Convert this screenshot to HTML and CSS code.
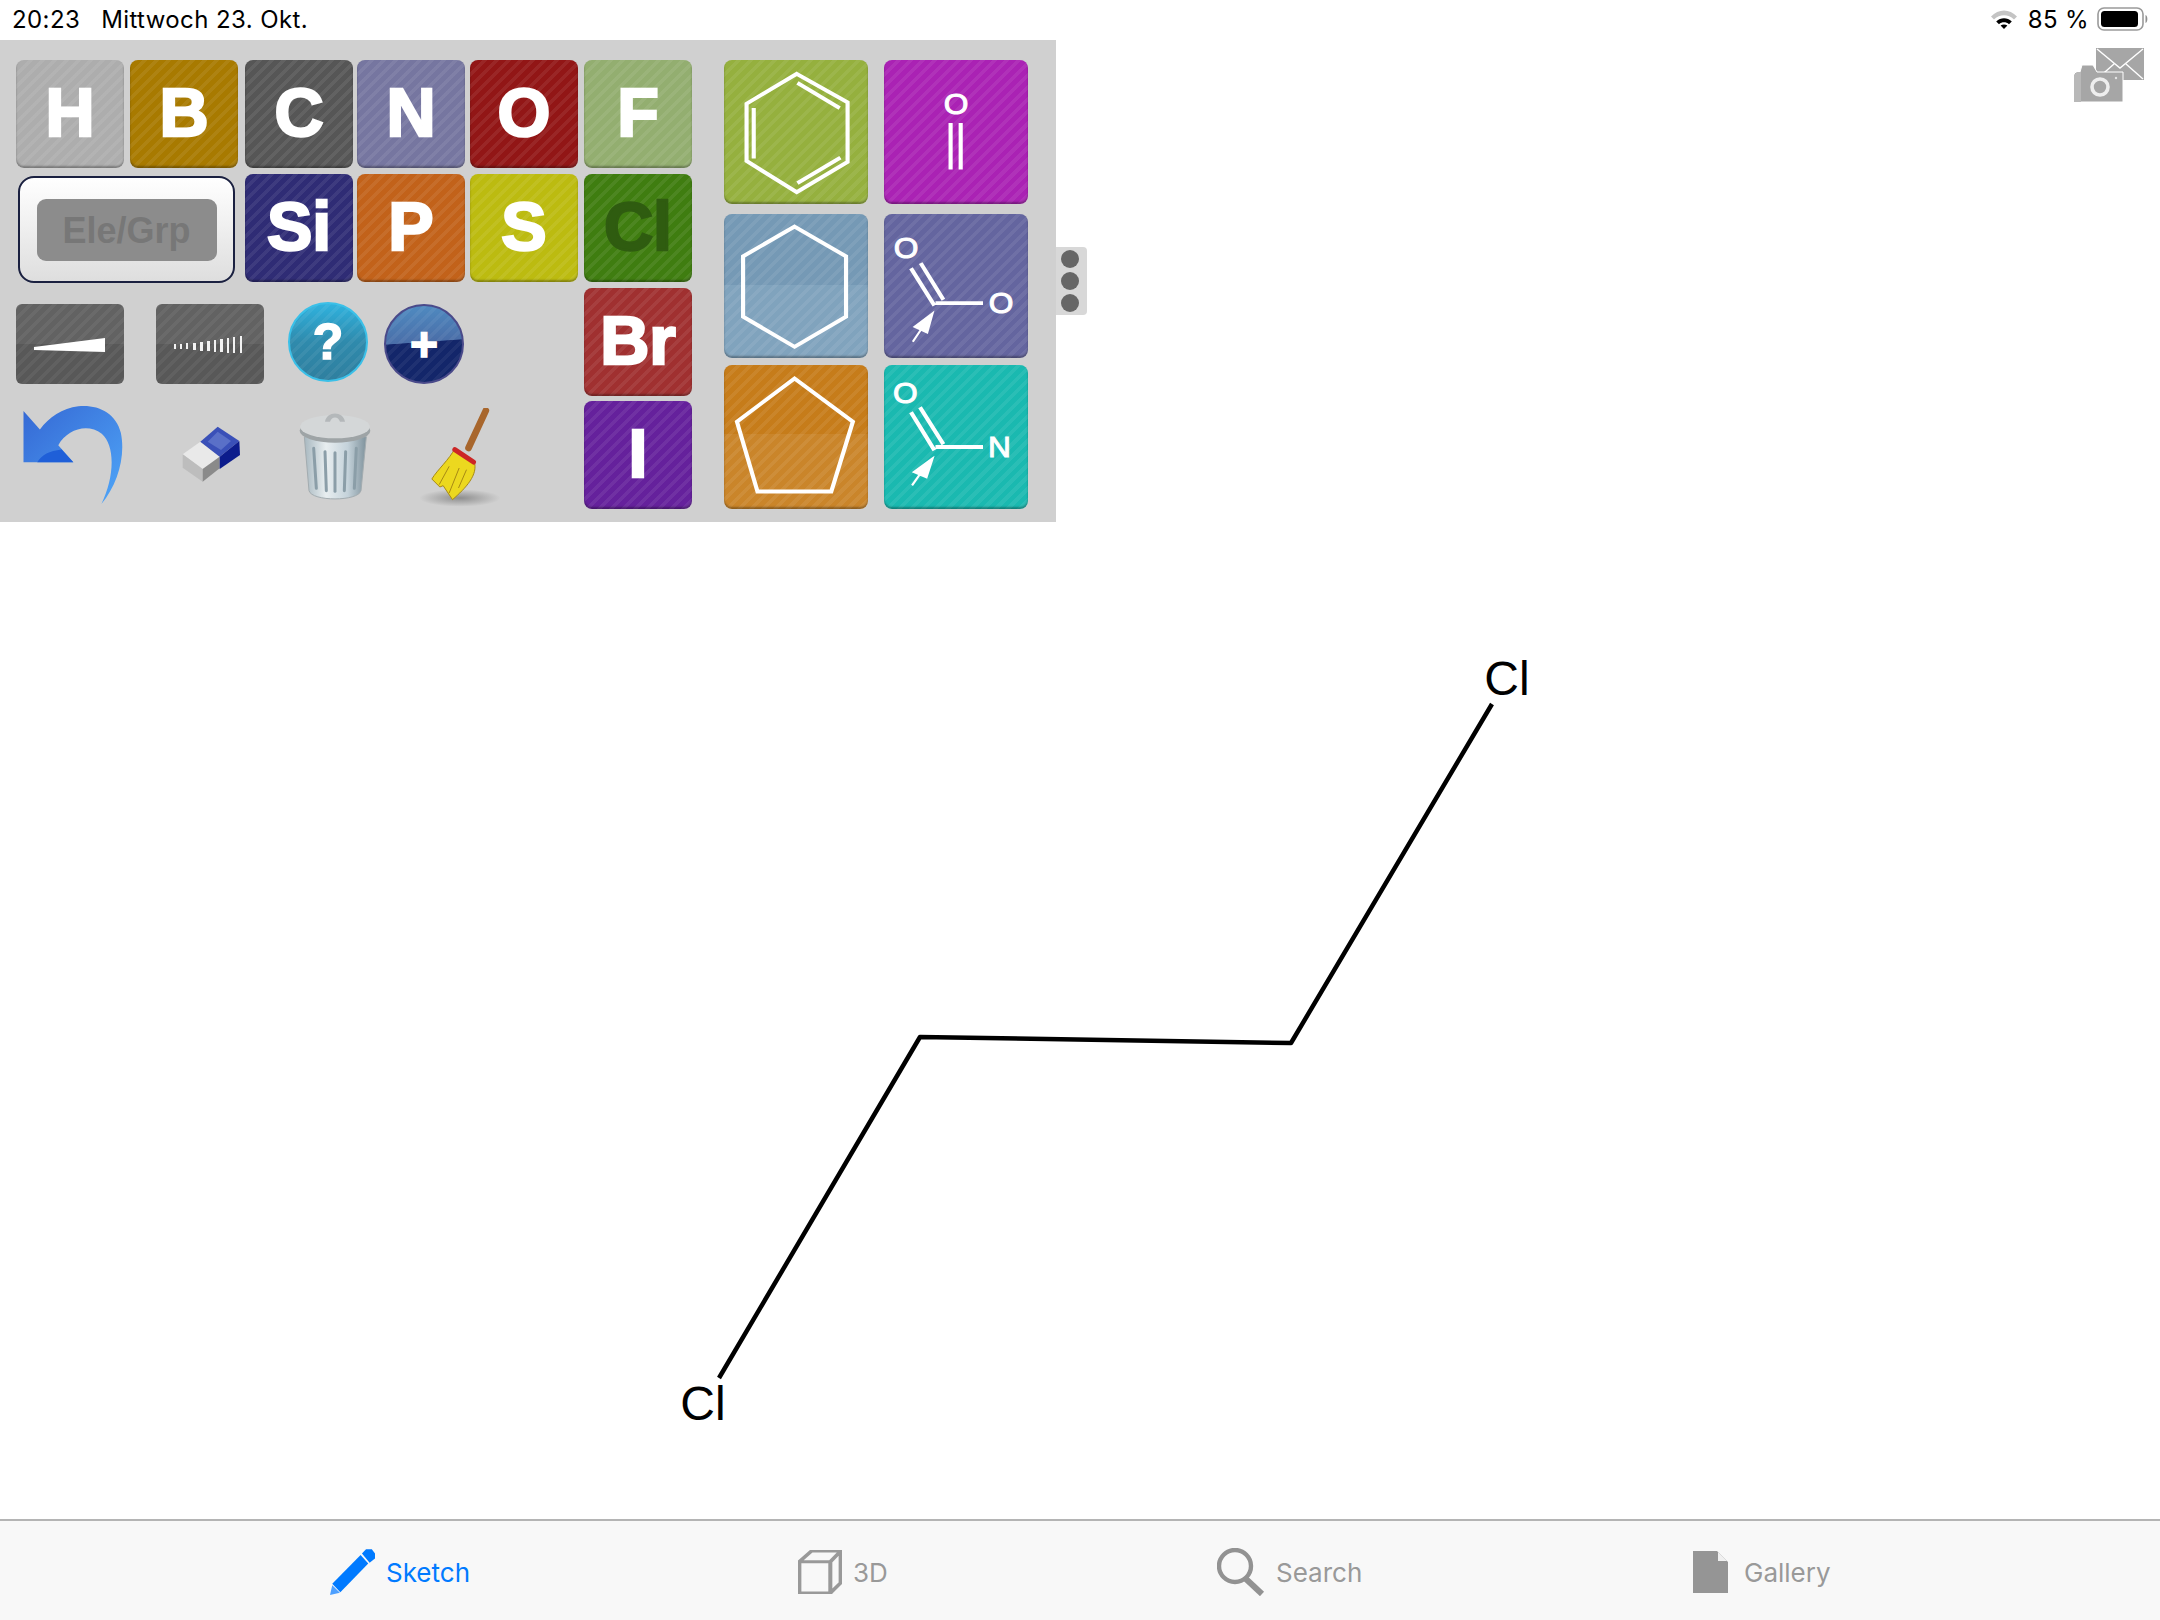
FILE: index.html
```html
<!DOCTYPE html>
<html lang="en">
<head>
  <meta charset="UTF-8">
  <title>Sketch</title>
  <link rel="stylesheet" href="styles.css">
</head>
<body>
  <div class="status">
    <span class="time">20:23</span>
    <span class="date">Mittwoch 23. Okt.</span>
    <svg class="wifi" viewBox="0 0 26 19">
      <path d="M0 6.5 C7.5 -1.5 18.5 -1.5 26 6.5 L23 9.4 C17 4 9 4 3 9.4 Z" fill="#c4c4c4"/>
      <path d="M5.2 11.4 C10 7.2 16 7.2 20.8 11.4 L18 14.2 C15 11.6 11 11.6 8 14.2 Z" fill="#000"/>
      <path d="M9.6 15.6 C11.6 14 14.4 14 16.4 15.6 L13 19 Z" fill="#000"/>
    </svg>
    <span class="pct">85 %</span>
    <svg class="battery" viewBox="0 0 52 24">
      <rect x="1" y="1" width="45" height="22" rx="6" fill="none" stroke="#9a9a9a" stroke-width="1.6"/>
      <rect x="4" y="4" width="37" height="16" rx="3.5" fill="#000"/>
      <path d="M48.5 8 C51 9 51 15 48.5 16 Z" fill="#8f8f8f"/>
    </svg>
  </div>

  <div class="canvas">
    <svg class="molecule" viewBox="0 0 2160 1479">
      <polyline points="1492,664 1291,1003 920,997 719,1338"></polyline>
      <text x="1507" y="655">Cl</text>
      <text x="703" y="1380">Cl</text>
    </svg>

    <svg class="snap" viewBox="0 0 70 54">
      <path d="M22 0 H70 V32 H22 Z" fill="#a6a6a6"/>
      <path d="M23 1 L46 20 L69 1 M23 31 L40 16 M69 31 L52 16" fill="none" stroke="#fff" stroke-width="1.4"/>
      <path d="M3 24 Q0 24 0 27 V54 H49 V24 H23 L19 17 H8 L6 24 Z" fill="#a6a6a6" stroke="#fff" stroke-width="1"/>
      <path d="M0 27 V54 H7 V24 H3 Z" fill="#b8b8b8"/>
      <circle cx="26" cy="39" r="8" fill="none" stroke="#eee" stroke-width="3.6"/>
      <circle cx="42" cy="30" r="1.2" fill="#e4e4e4"/>
    </svg>

    <div class="panel">
      <div class="elements">
        <div class="tile t-h">H</div>
        <div class="tile t-b">B</div>
        <div class="tile t-c">C</div>
        <div class="tile t-n">N</div>
        <div class="tile t-o">O</div>
        <div class="tile t-f">F</div>

        <div class="elegrp"><span>Ele/Grp</span></div>
        <div class="tile t-si">Si</div>
        <div class="tile t-p">P</div>
        <div class="tile t-s">S</div>
        <div class="tile t-cl">Cl</div>

        <div class="tools">
          <div class="tool-row">
            <div class="bond">
              <svg viewBox="0 0 108 80"><polygon points="18,43 89,34 89,48 18,46" fill="#fff"/></svg>
            </div>
            <div class="bond bond-hash">
              <svg viewBox="0 0 108 80">
                <g fill="#f2f2f2">
                  <rect x="18" y="40" width="2" height="5"/><rect x="24" y="40" width="2" height="5"/>
                  <rect x="30" y="39" width="2" height="6"/><rect x="37" y="39" width="3" height="7"/>
                  <rect x="44" y="38" width="3" height="9"/><rect x="51" y="37" width="3" height="10"/>
                  <rect x="58" y="36" width="2" height="12"/><rect x="64" y="35" width="3" height="13"/>
                  <rect x="71" y="34" width="2" height="15"/><rect x="77" y="33" width="2" height="16"/>
                  <rect x="84" y="32" width="2" height="17"/>
                </g>
              </svg>
            </div>
            <div class="round round-help">?</div>
            <div class="round round-plus">+</div>
          </div>
          <div class="tool-row tool-row-b">
            <svg class="undo" viewBox="64 375 296 293">
              <defs>
                <linearGradient id="undoFill" x1="0" y1="0" x2="1" y2="1">
                  <stop offset="0" stop-color="#3568d4"/>
                  <stop offset="1" stop-color="#4fa6f8"/>
                </linearGradient>
              </defs>
              <path d="M64 390 V543 H213 L168 492 C195 445 255 425 298 458 C340 495 335 590 297 668 C345 610 370 525 355 455 C340 395 285 370 228 376 C180 381 140 410 113 445 Z" fill="url(#undoFill)"/>
              <path d="M64 543 H213 L178 505 C140 510 120 520 105 543 Z" fill="#1f5fd8"/>
            </svg>
            <svg class="eraser" viewBox="520 440 180 180">
              <polygon points="525,528 578,490 636,535 585,572" fill="#e9e9e9"/>
              <polygon points="578,490 630,445 695,488 636,535" fill="#3a50b8"/>
              <polygon points="600,490 630,460 670,488 640,515" fill="#5a70c8"/>
              <polygon points="525,528 585,572 585,610 525,568" fill="#bdbdbd"/>
              <polygon points="585,572 636,535 636,570 585,610" fill="#8a8a8a"/>
              <polygon points="636,535 695,488 697,530 636,572" fill="#0c1c8c"/>
            </svg>
            <svg class="trash" viewBox="860 390 220 270">
              <defs>
                <linearGradient id="canFill" x1="0" y1="0" x2="1" y2="0">
                  <stop offset="0" stop-color="#a8b8c0"/>
                  <stop offset="0.35" stop-color="#e8eef0"/>
                  <stop offset="0.7" stop-color="#c4d2da"/>
                  <stop offset="1" stop-color="#7f929c"/>
                </linearGradient>
              </defs>
              <path d="M878 470 L892 632 C900 665 1040 665 1048 632 L1064 470 Z" fill="url(#canFill)" stroke="#a3acb0" stroke-width="3"/>
              <g stroke="#8b9ea8" stroke-width="9" stroke-linecap="round">
                <line x1="906" y1="505" x2="914" y2="625"/>
                <line x1="940" y1="515" x2="944" y2="632"/>
                <line x1="970" y1="518" x2="970" y2="634"/>
                <line x1="1002" y1="515" x2="998" y2="632"/>
                <line x1="1034" y1="505" x2="1028" y2="625"/>
              </g>
              <ellipse cx="970" cy="452" rx="106" ry="36" fill="#9ea4a6"/>
              <ellipse cx="970" cy="440" rx="105" ry="35" fill="#d4d7d8"/>
              <path d="M940 425 C945 392 995 392 1000 425 L985 425 C980 408 960 408 955 425 Z" fill="#b4b8ba"/>
            </svg>
            <svg class="broom" viewBox="1210 385 245 300">
              <defs>
                <radialGradient id="broomShadow">
                  <stop offset="0" stop-color="#8e8e8e"/>
                  <stop offset="1" stop-color="#8e8e8e" stop-opacity="0"/>
                </radialGradient>
              </defs>
              <ellipse cx="1332" cy="655" rx="122" ry="26" fill="url(#broomShadow)"/>
              <line x1="1410" y1="393" x2="1358" y2="505" stroke="#a8662c" stroke-width="20" stroke-linecap="round"/>
              <path d="M1318 505 C1300 540 1265 570 1248 598 L1272 622 L1282 618 L1310 660 C1350 625 1388 585 1375 545 Z" fill="#ecd81f" stroke="#a88a14" stroke-width="3"/>
              <path d="M1300 560 L1270 615 M1330 565 L1300 640 M1352 570 L1328 625" fill="none" stroke="#a88a14" stroke-width="3"/>
              <path d="M1317 510 L1373 547" stroke="#cc2626" stroke-width="15" stroke-linecap="round"/>
            </svg>
          </div>
        </div>

        <div class="tile t-br">Br</div>
        <div class="tile t-i">I</div>
      </div>

      <div class="rings">
        <div class="tile big t-benzene">
          <svg viewBox="515 92 402 428" preserveAspectRatio="none">
            <polygon points="718,133 860,218 860,395 718,485 578,392 578,222"/>
            <path d="M720 160 L838 235 M598 235 V385 M720 458 L840 382"/>
          </svg>
        </div>
        <div class="tile big t-carbonyl">
          <svg viewBox="965 92 400 425" preserveAspectRatio="none">
            <text x="1165" y="252">O</text>
            <path d="M1150 278 V415 M1178 278 V415"/>
          </svg>
        </div>
        <div class="tile big t-hexane">
          <svg viewBox="517 555 400 425" preserveAspectRatio="none">
            <polygon points="713,592 856,680 856,858 713,947 570,858 570,680"/>
          </svg>
        </div>
        <div class="tile big t-acid">
          <svg viewBox="965 555 400 425" preserveAspectRatio="none">
            <text x="1026" y="685">O</text>
            <text x="1290" y="848">O</text>
            <path d="M1040 715 L1105 825 M1067 700 L1130 808 M1108 818 H1240"/>
            <path class="arrow" d="M1045 932 L1075 885 M1100 848 L1050 888 L1085 905 Z"/>
          </svg>
        </div>
        <div class="tile big t-penta">
          <svg viewBox="517 1010 400 427" preserveAspectRatio="none">
            <polygon points="713,1050 875,1178 815,1385 610,1385 553,1178"/>
          </svg>
        </div>
        <div class="tile big t-amide">
          <svg viewBox="965 1005 400 427" preserveAspectRatio="none">
            <text x="1024" y="1118">O</text>
            <text x="1286" y="1278">N</text>
            <path d="M1040 1145 L1105 1258 M1065 1130 L1130 1240 M1108 1248 H1240"/>
            <path class="arrow" d="M1043 1362 L1072 1318 M1100 1282 L1048 1322 L1083 1338 Z"/>
          </svg>
        </div>
      </div>

      <div class="handle"><i></i><i></i><i></i></div>
    </div>
  </div>

  <div class="tabbar">
    <div class="tab active">
      <svg class="ico-pencil" viewBox="112 112 100 136" preserveAspectRatio="none">
        <polygon points="117,215 180,130 197,155 135,240" fill="#007aff"/>
        <polygon points="183,125 192,113 205,113 212,125 212,140 200,153" fill="#007aff"/>
        <polygon points="117,219 134,241 112,248" fill="#4ea0ff"/>
      </svg>
      <span>Sketch</span>
    </div>
    <div class="tab">
      <svg class="ico-cube" viewBox="1160 117 98 131" preserveAspectRatio="none">
        <path d="M1163 152 H1232 V245 H1163 Z M1163 152 L1190 120 H1255 V215 L1232 245 M1232 152 L1255 120" fill="none" stroke="#999" stroke-width="9"/>
      </svg>
      <span>3D</span>
    </div>
    <div class="tab">
      <svg class="ico-search" viewBox="0 0 48 48">
        <circle cx="18" cy="18" r="16" fill="none" stroke="#929292" stroke-width="4.4"/>
        <line x1="29" y1="31" x2="45" y2="46" stroke="#929292" stroke-width="6"/>
      </svg>
      <span>Search</span>
    </div>
    <div class="tab tab-doc">
      <svg class="ico-doc" viewBox="0 0 35 42">
        <polygon points="0,0 24,0 35,11 35,42 0,42" fill="#959595"/>
        <polygon points="25,1 25,10 34,10" fill="#f0f0f0"/>
      </svg>
      <span>Gallery</span>
    </div>
  </div>
</body>
</html>
```

FILE: styles.css
```css
* { box-sizing: border-box; margin: 0; padding: 0; }

body {
  width: 2160px;
  height: 1620px;
  display: flex;
  flex-direction: column;
  background: #fff;
  overflow: hidden;
  font-family: "Inter", "Liberation Sans", sans-serif;
}

/* status bar */
.status {
  height: 40px;
  display: flex;
  align-items: center;
  padding: 0 11px 2px 12px;
  font-size: 24px;
  letter-spacing: .4px;
  color: #000;
}
.date { margin-left: 21px; }
.wifi { width: 26px; height: 19px; margin-left: auto; }
.pct { margin-left: 11px; }
.battery { width: 52px; height: 24px; margin-left: 8px; }

/* drawing area */
.canvas {
  flex: 1;
  position: relative;
}
.molecule {
  position: absolute;
  left: 0;
  top: 0;
  width: 2160px;
  height: 1479px;
}
.molecule polyline {
  fill: none;
  stroke: #000;
  stroke-width: 4.5;
  stroke-linejoin: round;
}
.molecule text {
  font: 48px "Liberation Sans", sans-serif;
  text-anchor: middle;
  fill: #000;
}
.snap {
  position: absolute;
  left: 2074px;
  top: 8px;
  width: 70px;
  height: 54px;
}

/* palette */
.panel {
  position: relative;
  width: 1056px;
  height: 482px;
  padding: 20px 0 0 16px;
  background: #d0d0d0;
  display: flex;
  gap: 32px;
}
.elements {
  display: grid;
  grid-template-columns: 114px 115px 112px 113px 114px 108px;
  grid-template-rows: 114px 114px 113px 108px;
}
.rings {
  display: grid;
  grid-template-columns: 160px 144px;
  grid-template-rows: 154px 151px 145px;
}

.tile {
  width: 108px;
  height: 108px;
  display: flex;
  align-items: center;
  justify-content: center;
  border-radius: 8px;
  color: #fff;
  font: bold 68px "Liberation Sans", sans-serif;
  -webkit-text-stroke: 2.5px currentColor;
  padding-bottom: 4px;
  background-image: repeating-linear-gradient(135deg, rgba(255,255,255,.07) 0 4px, rgba(255,255,255,0) 4px 8.5px);
  box-shadow: inset 0 -2px 2px rgba(0,0,0,.3);
}
.tile.big {
  width: 144px;
  height: 144px;
  padding: 0;
}
.tile svg {
  display: block;
  width: 100%;
  height: 100%;
}
.tile svg polygon, .tile svg path {
  fill: none;
  stroke: #fff;
  stroke-width: 11.5;
}
.tile svg path.arrow {
  fill: #fff;
  stroke-width: 6;
}
.tile svg text {
  font: 88px "Liberation Sans", sans-serif;
  text-anchor: middle;
  fill: #fff;
  stroke: #fff;
  stroke-width: 3;
  -webkit-text-stroke: 0;
}

.t-h { background-color: #adadad; }
.t-b { background-color: #a87a00; }
.t-c { background-color: #565656; }
.t-n { background-color: #7676a0; }
.t-o { background-color: #921616; }
.t-f { background-color: #93ae70; }
.t-si { background-color: #2f2c75; }
.t-p { background-color: #c2621a; }
.t-s { background-color: #bcbb10; }
.t-cl { background-color: #3f7d10; color: #2f5c10; }
.t-br { background-color: #a03030; grid-column: 6; grid-row: 3; }
.t-i { background-color: #65219c; grid-column: 6; grid-row: 4; }
.t-benzene { background-color: #95b03e; }
.t-carbonyl { background-color: #aa22b4; }
.t-hexane { background: repeating-linear-gradient(135deg, rgba(255,255,255,.07) 0 4px, rgba(255,255,255,0) 4px 8.5px), linear-gradient(#7599b5 49%, #80a3bd 49%); }
.t-acid { background-color: #64659f; }
.t-penta { background: repeating-linear-gradient(135deg, rgba(255,255,255,.07) 0 4px, rgba(255,255,255,0) 4px 8.5px), linear-gradient(#c67c1a 48%, #ca852a 48%); }
.t-amide { background-color: #1ab9b0; }

.elegrp {
  grid-column: 1 / span 2;
  width: 217px;
  height: 107px;
  margin: 2px 0 0 2px;
  display: flex;
  align-items: center;
  justify-content: center;
  border: 2px solid #1a2040;
  border-radius: 16px;
  background: linear-gradient(#fff, #dedede);
}
.elegrp span {
  width: 180px;
  height: 62px;
  display: flex;
  align-items: center;
  justify-content: center;
  padding-top: 2px;
  border-radius: 9px;
  background: #8c8c8c;
  color: #777;
  font: bold 36px "Liberation Sans", sans-serif;
}

/* bond, help, undo... */
.tools {
  grid-column: 1 / span 5;
  grid-row: 3 / span 2;
  padding-top: 16px;
}
.tool-row {
  display: flex;
  align-items: center;
  height: 80px;
}
.tool-row-b {
  height: 100px;
  margin-top: 21px;
}
.bond {
  width: 108px;
  height: 80px;
  margin-right: 32px;
  border-radius: 6px;
  background-image: repeating-linear-gradient(135deg, rgba(255,255,255,.05) 0 4px, rgba(255,255,255,0) 4px 8.5px), linear-gradient(#626262 50%, #585858 50%);
}
.bond svg { display: block; width: 108px; height: 80px; }
.bond-hash { margin-right: 24px; }
.round {
  width: 80px;
  height: 80px;
  border-radius: 50%;
  display: flex;
  align-items: center;
  justify-content: center;
  color: #fff;
  font: bold 50px "Liberation Sans", sans-serif;
  -webkit-text-stroke: 1.5px #fff;
}
.round-help {
  background-image: repeating-linear-gradient(135deg, rgba(255,255,255,.06) 0 4px, rgba(255,255,255,0) 4px 8.5px), linear-gradient(#2fb2de, #2f8aac 50%, #2f7f9f);
  border: 2px solid #3bc0e8;
  margin-right: 16px;
  margin-top: -4px;
}
.round-plus {
  background-image: repeating-linear-gradient(135deg, rgba(255,255,255,.05) 0 4px, rgba(255,255,255,0) 4px 8.5px), linear-gradient(176deg, #4f8cc2, #4a6ea8 47%, #13266a 48%);
  border: 2px solid #4a4a8a;
  font-size: 48px;
}
.undo { width: 102px; height: 98px; margin-left: 6px; }
.eraser { width: 62px; height: 60px; margin-left: 56px; }
.trash { width: 76px; height: 90px; margin-left: 55px; }
.broom { width: 84px; height: 100px; margin-left: 45px; margin-top: 6px; }

.handle {
  position: absolute;
  left: 100%;
  top: 207px;
  width: 31px;
  height: 68px;
  padding-left: 5px;
  display: flex;
  flex-direction: column;
  justify-content: center;
  gap: 4px;
  background: #d8d8d8;
  border-radius: 0 4px 4px 0;
}
.handle i {
  display: block;
  width: 18px;
  height: 18px;
  border-radius: 50%;
  background: #666;
}

/* bottom tabs */
.tabbar {
  height: 101px;
  padding: 3px 0 0 330px;
  border-top: 2px solid #b4b4b4;
  background: #f8f8f8;
  display: grid;
  grid-template-columns: 468px 419px 476px 1fr;
  align-items: center;
  font-size: 26px;
  color: #999;
}
.tab { display: flex; align-items: center; gap: 11px; }
.tab.active { color: #007aff; }
.tab-doc { gap: 16px; }
.ico-pencil { width: 45px; height: 46px; }
.ico-cube { width: 44px; height: 44px; }
.ico-search { width: 48px; height: 48px; }
.ico-doc { width: 35px; height: 42px; }
```
